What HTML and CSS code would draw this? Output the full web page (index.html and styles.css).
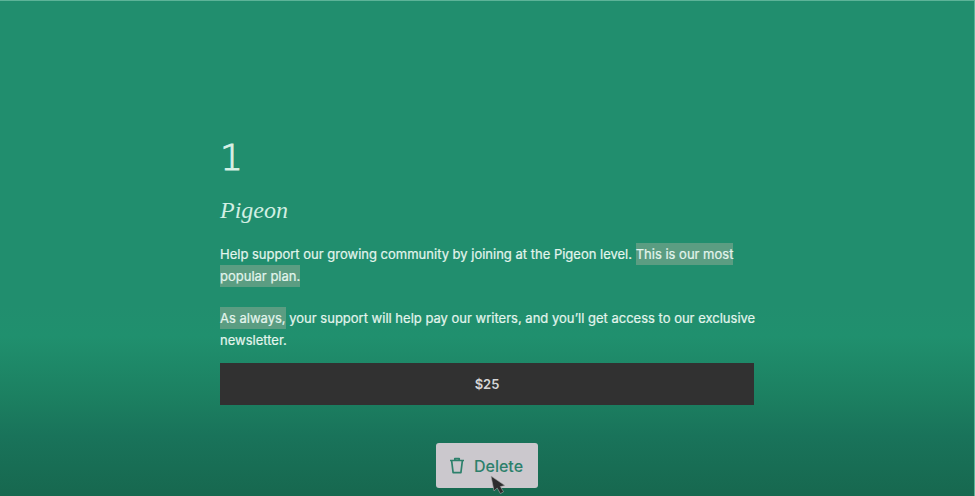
FILE: index.html
```html
<!DOCTYPE html>
<html lang="en">
<head>
    <meta charset="UTF-8">
    <meta name="viewport" content="width=device-width, initial-scale=1.0">
    <title>Pigeon</title>
    <link rel="stylesheet" href="styles.css">
</head>
<body>
    <main class="page">
        <section class="plan">
            <div class="number">1</div>
            <h1 class="name">Pigeon</h1>
            <p class="text">Help support our growing community by joining at the Pigeon level. <mark>This is our most popular plan.</mark></p>
            <p class="text"><mark>As always,</mark> your support will help pay our writers, and you’ll get access to our exclusive newsletter.</p>
            <button class="price" type="button">$25</button>
        </section>

        <button class="delete" type="button">
            <svg class="trash" width="16" height="18" viewBox="0 0 16 18" fill="none" stroke="currentColor" stroke-width="1.7" stroke-linejoin="round">
                <path d="M1 3.5h14M5.8 3.5V1.6h4.4v1.9M2.6 3.5l1.5 12.2h7.8l1.5-12.2"/>
            </svg>
            Delete
            <svg class="cursor" width="18" height="20" viewBox="0 0 18 20">
                <path d="M1 1l3 15 3.2-3 3.2 5.6 3.2-1.8-3.2-5.2 4.6-1z" fill="#2d2d2e" stroke="#a9aaab" stroke-width="0.6"/>
            </svg>
        </button>
    </main>
</body>
</html>
```

FILE: styles.css
```css
* {
    box-sizing: border-box;
}
body {
    margin: 0;
    font-family: Inter, "Liberation Sans", sans-serif;
    color: #e3f5ed;
    background-color: #218e6e;
}
.page {
    display: flex;
    flex-direction: column;
    align-items: center;
    min-height: 100vh;
    padding: 132px 20px 8px;
    border-top: 1px solid #5db398;
    border-right: 1px solid #5db398;
    background: linear-gradient(to top, #17684f 0, #19735a 60px, #1c8061 100px, #20906e 160px, #218e6e 190px);
}
.plan {
    width: 100%;
    max-width: 534px;
}
.number {
    font-family: "DejaVu Sans", sans-serif;
    font-weight: 200;
    font-size: 36px;
    line-height: 50px;
    -webkit-text-stroke: 1px #d2efe3;
}
.name {
    margin: 13px 0 19px;
    font-family: "Liberation Serif", serif;
    font-weight: normal;
    font-style: italic;
    font-size: 24px;
    line-height: 28px;
    color: #d2efe3;
}
.text {
    margin: 0 -8px 20px 0;
    font-size: 13px;
    line-height: 22px;
    -webkit-text-stroke: 0.2px #e3f5ed;
}
mark {
    padding: 3px 0;
    color: inherit;
    background-color: #5b9d82;
}
.price {
    display: block;
    width: 100%;
    height: 42px;
    margin-top: -8px;
    border: none;
    font-family: inherit;
    font-size: 13px;
    font-weight: 600;
    color: #d6d6d6;
    background-color: #313131;
}
.delete {
    position: relative;
    display: flex;
    align-items: center;
    gap: 9px;
    height: 45px;
    margin-top: 38px;
    padding: 0 15px 0 13px;
    border: none;
    border-radius: 3px;
    font-family: inherit;
    font-size: 16px;
    font-weight: 500;
    color: #2c806b;
    background-color: #cbc8cd;
}
.cursor {
    position: absolute;
    left: 54px;
    top: 32px;
}
```
